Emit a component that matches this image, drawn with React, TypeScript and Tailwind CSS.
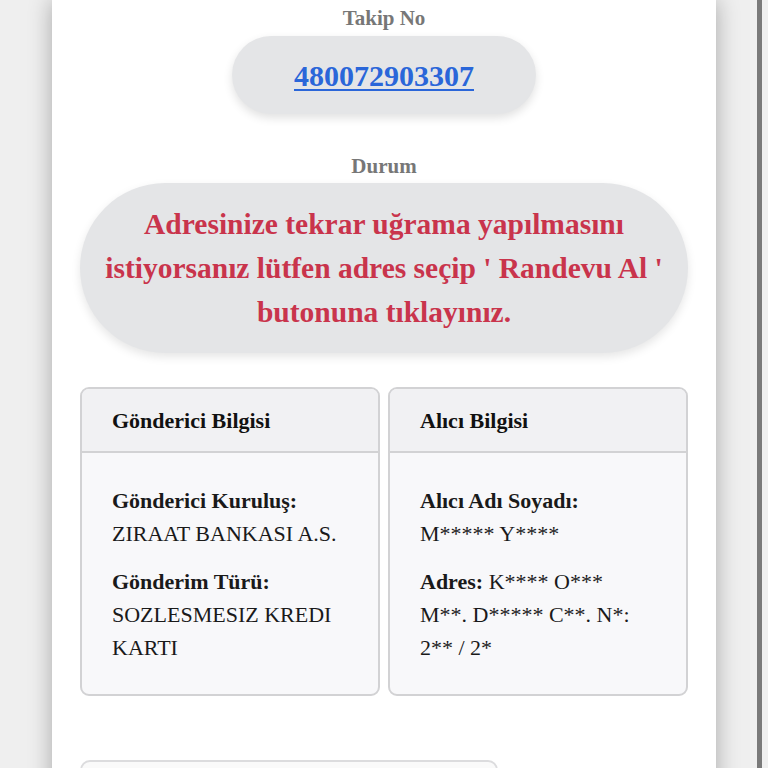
const serif = "font-['Liberation_Serif','Times_New_Roman',serif]";

function InfoCard({ title, children }: { title: string; children: React.ReactNode }) {
  return (
    <div className="flex flex-col rounded-[9px] border-2 border-[#d2d2d4] bg-[#f8f8fa] overflow-hidden">
      <div className="h-[64px] flex items-center px-[30px] bg-[#f1f1f3] border-b-2 border-[#d2d2d4]">
        <span className="text-[22px] font-bold text-[#111]">{title}</span>
      </div>
      <div className="flex flex-col gap-[15px] px-[30px] pt-[31px] pb-[30px] text-[22px] leading-[33px] text-[#1a1a1a]">
        {children}
      </div>
    </div>
  );
}

export default function App() {
  return (
    <div className={`min-h-screen bg-[#efefef] flex justify-center ${serif}`}>
      <div className="w-[664px] bg-white shadow-[0_0_22px_rgba(0,0,0,0.3)] px-[28px] pt-[4px] pb-[40px] flex flex-col items-center">
        <span className="text-[21px] leading-[28px] font-bold text-[#777]">Takip No</span>
        <div className="mt-[4px] w-[304px] h-[78px] rounded-full bg-[#e4e5e7] shadow-[0_4px_10px_rgba(0,0,0,0.12)] flex items-center justify-center">
          <a href="#" className="text-[30px] font-bold text-[#2a66d9] underline decoration-2 underline-offset-[3px]">
            480072903307
          </a>
        </div>

        <span className="mt-[38px] text-[21px] leading-[28px] font-bold text-[#777]">Durum</span>
        <div className="mt-[3px] w-full rounded-[86px] bg-[#e4e5e7] shadow-[0_4px_10px_rgba(0,0,0,0.1)] py-[19px] px-[16px] text-center">
          <p className="text-[29.5px] leading-[44px] font-bold text-[#c9344c]">
            Adresinize tekrar uğrama yapılmasını
            <br />
            istiyorsanız lütfen adres seçip ' Randevu Al '
            <br />
            butonuna tıklayınız.
          </p>
        </div>

        <div className="mt-[34px] w-full grid grid-cols-2 gap-[8px]">
          <InfoCard title="Gönderici Bilgisi">
            <div>
              <div className="font-bold">Gönderici Kuruluş:</div>
              <div>ZIRAAT BANKASI A.S.</div>
            </div>
            <div>
              <div className="font-bold">Gönderim Türü:</div>
              <div>SOZLESMESIZ KREDI KARTI</div>
            </div>
          </InfoCard>
          <InfoCard title="Alıcı Bilgisi">
            <div>
              <div className="font-bold">Alıcı Adı Soyadı:</div>
              <div>M***** Y****</div>
            </div>
            <div>
              <span className="font-bold">Adres:</span> K**** O***
              <br />
              M**. D***** C**. N*:
              <br />
              2** / 2*
            </div>
          </InfoCard>
        </div>

        <div className="mt-[64px] self-start w-[418px] h-[80px] rounded-[10px] border-2 border-[#dcdcde] bg-[#fafafa]" />
      </div>

      <div className="fixed top-0 right-[6px] w-[5px] h-screen bg-[#7a7a7a]" />
    </div>
  );
}
